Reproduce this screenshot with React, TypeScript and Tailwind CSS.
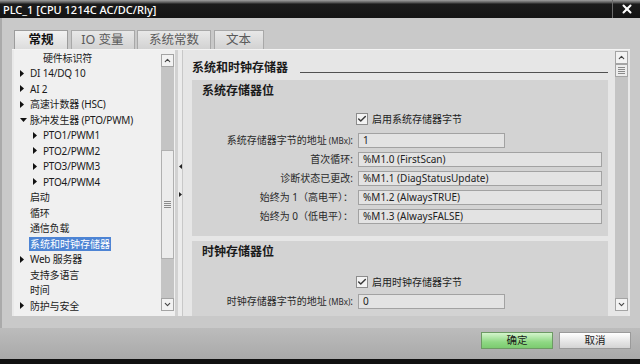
import { Check, ChevronDown, ChevronUp, X } from 'lucide-react';

type TreeItem = {
  label: string;
  level: 1 | 2;
  arrow?: 'right' | 'down';
  selected?: boolean;
};

const tree: TreeItem[] = [
  { label: '硬件标识符', level: 2 },
  { label: 'DI 14/DQ 10', level: 1, arrow: 'right' },
  { label: 'AI 2', level: 1, arrow: 'right' },
  { label: '高速计数器 (HSC)', level: 1, arrow: 'right' },
  { label: '脉冲发生器 (PTO/PWM)', level: 1, arrow: 'down' },
  { label: 'PTO1/PWM1', level: 2, arrow: 'right' },
  { label: 'PTO2/PWM2', level: 2, arrow: 'right' },
  { label: 'PTO3/PWM3', level: 2, arrow: 'right' },
  { label: 'PTO4/PWM4', level: 2, arrow: 'right' },
  { label: '启动', level: 1 },
  { label: '循环', level: 1 },
  { label: '通信负载', level: 1 },
  { label: '系统和时钟存储器', level: 1, selected: true },
  { label: 'Web 服务器', level: 1, arrow: 'right' },
  { label: '支持多语言', level: 1 },
  { label: '时间', level: 1 },
  { label: '防护与安全', level: 1, arrow: 'right' },
];

const tabs = ['常规', 'IO 变量', '系统常数', '文本'];
const tabWidths = ['w-[54px]', 'w-[64px]', 'w-[74px]', 'w-[50px]'];

function Arrow({ dir }: { dir?: 'right' | 'down' }) {
  if (dir === 'right')
    return (
      <svg width="4" height="7" viewBox="0 0 4 7">
        <path d="M0 0L4 3.5L0 7z" fill="#111" />
      </svg>
    );
  if (dir === 'down')
    return (
      <svg width="7" height="4" viewBox="0 0 7 4">
        <path d="M0 0L7 0L3.5 4z" fill="#111" />
      </svg>
    );
  return null;
}

function Grip() {
  return (
    <div className="flex flex-col gap-[1px]">
      <div className="w-[7px] h-px bg-[#8a8a8a]" />
      <div className="w-[7px] h-px bg-[#8a8a8a]" />
      <div className="w-[7px] h-px bg-[#8a8a8a]" />
      <div className="w-[7px] h-px bg-[#8a8a8a]" />
    </div>
  );
}

function ScrollButton({ down }: { down?: boolean }) {
  return (
    <div className="h-[13px] w-[13px] border border-[#a4a4a4] bg-[#f2f2f2] flex items-center justify-center">
      {down ? (
        <ChevronDown size={9} strokeWidth={3} color="#444" />
      ) : (
        <ChevronUp size={9} strokeWidth={3} color="#444" />
      )}
    </div>
  );
}

function Checkbox({ label }: { label: string }) {
  return (
    <div className="h-[16px] flex items-center pl-[164px]">
      <div className="w-[12px] h-[12px] border border-[#8c8c8c] bg-[#f3f3f3] flex items-center justify-center">
        <Check size={10} strokeWidth={3.5} color="#3a3a3a" />
      </div>
      <span className="ml-[4px] text-[10px] text-[#222]">{label}</span>
    </div>
  );
}

function Field({ label, unit, value, short }: { label: string; unit?: string; value: string; short?: boolean }) {
  return (
    <div className="h-[19px] flex items-center">
      <div className="w-[161px] text-right text-[10px] text-[#2a2a2a] whitespace-nowrap">
        {label}
        {unit && <span className="text-[8px]"> {unit}</span>}
        {unit && ':'}
      </div>
      <div
        className={
          short
            ? 'ml-[5px] w-[147px] h-[15px] border border-[#a2a2a2] bg-[#e3e3e3] pl-[4px] text-[10px] leading-[13px] text-[#222]'
            : 'ml-[5px] w-[244px] h-[15px] border border-[#a2a2a2] bg-[#e3e3e3] pl-[4px] text-[10px] leading-[13px] text-[#222]'
        }
      >
        {value}
      </div>
    </div>
  );
}

export default function App() {
  return (
    <div className="w-[640px] h-[364px] flex flex-col overflow-hidden bg-[#c9c9c9] font-['Noto_Sans','Noto_Sans_CJK_SC',sans-serif]">
      {/* Title bar */}
      <div className="h-[18px] flex items-stretch bg-[linear-gradient(#a0a0a0,#4a4a4a_3px,#1b1b1b_4px,#141414)]">
        <div className="flex-1 pl-[3px] pt-[2px] text-[11px] leading-[16px] font-medium text-white">
          PLC_1 [CPU 1214C AC/DC/Rly]
        </div>
        <div className="w-[28px] border-l border-[#6a6a6a] flex items-center justify-center">
          <X size={14} strokeWidth={3.5} color="#fff" />
        </div>
      </div>

      {/* Body */}
      <div className="flex-1 flex flex-col px-[10px] pt-[12px] pb-[12px] border-l-[2px] border-[#aaaaaa]">
        {/* Tabs */}
        <div className="h-[19px] flex items-end gap-[2.5px] pl-[2px]">
          {tabs.map((t, i) => (
            <div
              key={t}
              className={
                i === 0
                  ? `${tabWidths[i]} h-[19px] flex items-center justify-center border border-b-0 border-[#9c9c9c] bg-[linear-gradient(#f2f2f2,#dcdcdc)] text-[12.5px] font-bold text-[#111]`
                  : `${tabWidths[i]} h-[19px] flex items-center justify-center border border-b-0 border-[#a8a8a8] bg-[linear-gradient(#e8e8e8,#d2d2d2)] text-[12.5px] text-[#5a5a5a]`
              }
            >
              {t}
            </div>
          ))}
        </div>

        {/* Pane */}
        <div className="flex-1 flex bg-[#e9e9e9] border-t border-[#f4f4f4] pl-[2px] pr-[2px] overflow-hidden">
          {/* Tree */}
          <div className="w-[161px] flex bg-[#f0f0f0]">
            <div className="flex-1 flex flex-col text-[10px] text-[#1a1a1a]">
              {tree.map((item) => (
                <div
                  key={item.label}
                  className={
                    item.level === 1
                      ? 'h-[15.5px] shrink-0 flex items-center pl-[6px]'
                      : 'h-[15.5px] shrink-0 flex items-center pl-[19px]'
                  }
                >
                  <div className="w-[10px] flex items-center">
                    <Arrow dir={item.arrow} />
                  </div>
                  <span
                    className={
                      item.selected
                        ? 'bg-[#4d84d4] text-white leading-[14px] px-[1px] -ml-[1px]'
                        : 'leading-[14px] whitespace-nowrap tracking-[-0.2px]'
                    }
                  >
                    {item.label}
                  </span>
                </div>
              ))}
            </div>
            {/* Tree scrollbar */}
            <div className="w-[15px] flex flex-col items-center pt-[4px] pb-[5px]">
              <ScrollButton />
              <div className="flex-1 w-[13px] bg-[#c4c4c4] flex flex-col">
                <div className="h-[83px]" />
                <div className="h-[109px] border border-[#b0b0b0] bg-[#ececec] flex items-center justify-center">
                  <Grip />
                </div>
              </div>
              <ScrollButton down />
            </div>
          </div>

          {/* Splitter */}
          <div className="w-[8px] flex flex-col items-center border-l-[3px] border-[#d2d2d2] border-r border-r-[#c8c8c8] bg-[#ececec]">
            <div className="h-[114px]" />
            <svg width="3" height="5" viewBox="0 0 3 5">
              <path d="M3 0L0 2.5L3 5z" fill="#222" />
            </svg>
            <div className="h-[23px]" />
            <svg width="3" height="5" viewBox="0 0 3 5">
              <path d="M0 0L3 2.5L0 5z" fill="#222" />
            </svg>
          </div>

          {/* Right panel */}
          <div className="flex-1 flex bg-[#e6e6e6]">
            <div className="flex-1 flex flex-col">
              <div className="h-[30px] shrink-0 flex items-end pb-[4px] pl-[9px] pr-[6px]">
                <span className="text-[12px] leading-[16px] font-bold text-[#1a1a1a]">系统和时钟存储器</span>
                <div className="flex-1 h-px bg-[#505050] ml-[12px] mb-[3px]" />
              </div>

              <div className="h-[156px] shrink-0 ml-[9px] mr-[6px] bg-[#d3d3d3] flex flex-col pt-[3px]">
                <div className="pl-[10px] text-[12px] leading-[16px] font-bold text-[#1a1a1a]">系统存储器位</div>
                <div className="mt-[12px]">
                  <Checkbox label="启用系统存储器字节" />
                </div>
                <div className="mt-[4px] flex flex-col">
                  <Field label="系统存储器字节的地址" unit="(MBx)" value="1" short />
                  <Field label="首次循环:" value="%M1.0 (FirstScan)" />
                  <Field label="诊断状态已更改:" value="%M1.1 (DiagStatusUpdate)" />
                  <Field label="始终为 1（高电平）：" value="%M1.2 (AlwaysTRUE)" />
                  <Field label="始终为 0（低电平）：" value="%M1.3 (AlwaysFALSE)" />
                </div>
              </div>

              <div className="h-[5px] shrink-0" />

              <div className="flex-1 ml-[9px] mr-[6px] bg-[#d3d3d3] flex flex-col pt-[3px]">
                <div className="pl-[10px] text-[12px] leading-[16px] font-bold text-[#1a1a1a]">时钟存储器位</div>
                <div className="mt-[14px]">
                  <Checkbox label="启用时钟存储器字节" />
                </div>
                <div className="mt-[2px]">
                  <Field label="时钟存储器字节的地址" unit="(MBx)" value="0" short />
                </div>
              </div>
            </div>

            {/* Right scrollbar */}
            <div className="w-[14px] flex flex-col items-center pt-[1px] pb-[5px]">
              <ScrollButton />
              <div className="h-[13px] w-[13px] border border-[#a4a4a4] bg-[#ececec] flex items-center justify-center">
                <Grip />
              </div>
              <div className="flex-1 w-[13px] bg-[#c4c4c4]" />
              <ScrollButton down />
            </div>
          </div>
        </div>
      </div>

      {/* Button bar */}
      <div className="h-[31px] flex items-start justify-end gap-[6px] pt-[4px] pr-[9px] bg-[linear-gradient(#bcbcbc,#a9a9a9)]">
        <div className="w-[72px] h-[17px] flex items-center justify-center border border-[#6d9a64] bg-[linear-gradient(#d4f5cc,#8fd884_60%,#7ccb70)] text-[10.5px] text-[#1a1a1a]">
          确定
        </div>
        <div className="w-[72px] h-[17px] flex items-center justify-center border border-[#9a9a9a] bg-[linear-gradient(#ffffff,#e4e4e4_60%,#d4d4d4)] text-[10.5px] text-[#1a1a1a]">
          取消
        </div>
      </div>
      <div className="h-[5px] bg-[#111]" />
    </div>
  );
}
